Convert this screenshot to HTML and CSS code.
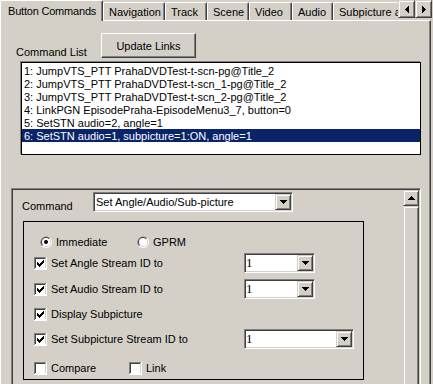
FILE: index.html
```html
<!DOCTYPE html>
<html>
<head>
<meta charset="utf-8">
<link rel="stylesheet" href="styles.css">
</head>
<body>
<div class="tabs">
  <div class="tab active">Button Commands</div>
  <div class="tab w62">Navigation</div>
  <div class="tab w42">Track</div>
  <div class="tab w42">Scene</div>
  <div class="tab w43">Video</div>
  <div class="tab w41">Audio</div>
  <div class="tab clip">Subpicture a</div>
  <div class="tab-scroll">
    <div class="sbtn"><svg width="4" height="7" viewBox="0 0 4 7" shape-rendering="crispEdges"><path d="M3 0h1v7h-1z M2 1h1v5h-1z M1 2h1v3h-1z M0 3h1v1h-1z" fill="#000"/></svg></div>
    <div class="sbtn"><svg width="4" height="7" viewBox="0 0 4 7" shape-rendering="crispEdges"><path d="M0 0h1v7h-1z M1 1h1v5h-1z M2 2h1v3h-1z M3 3h1v1h-1z" fill="#000"/></svg></div>
  </div>
</div>
<div class="panel">
  <div class="list-head">
    <span class="list-label">Command List</span>
    <div class="btn">Update Links</div>
  </div>
  <div class="listbox">
    <div class="item">1: JumpVTS_PTT PrahaDVDTest-t-scn-pg@Title_2</div>
    <div class="item">2: JumpVTS_PTT PrahaDVDTest-t-scn_1-pg@Title_2</div>
    <div class="item">3: JumpVTS_PTT PrahaDVDTest-t-scn_2-pg@Title_2</div>
    <div class="item">4: LinkPGN EpisodePraha-EpisodeMenu3_7, button=0</div>
    <div class="item">5: SetSTN audio=2, angle=1</div>
    <div class="item sel">6: SetSTN audio=1, subpicture=1:ON, angle=1</div>
  </div>
  <div class="scrollview">
    <div class="sv-content">
      <div class="cmd-row">
        <span class="cmd-label">Command</span>
        <div class="combo w200">
          <span class="combo-text sans">Set Angle/Audio/Sub-picture</span>
          <div class="dd"><svg width="7" height="4" viewBox="0 0 7 4" shape-rendering="crispEdges"><path d="M0 0h7v1h-7z M1 1h5v1h-5z M2 2h3v1h-3z M3 3h1v1h-1z" fill="#000"/></svg></div>
        </div>
      </div>
      <div class="group">
        <div class="row radio-row">
          <div class="opt w97">
            <svg class="radio" width="12" height="12" viewBox="0 0 12 12"><circle cx="6" cy="6" r="6" fill="#fff"/><path d="M1.76 10.24A6 6 0 0 1 10.24 1.76Z" fill="#808080"/><circle cx="6" cy="6" r="5" fill="#d4d0c8"/><path d="M2.46 9.54A5 5 0 0 1 9.54 2.46Z" fill="#404040"/><circle cx="6" cy="6" r="4" fill="#fff"/><circle cx="6" cy="6" r="2" fill="#000"/></svg>
            <span>Immediate</span>
          </div>
          <div class="opt">
            <svg class="radio" width="12" height="12" viewBox="0 0 12 12"><circle cx="6" cy="6" r="6" fill="#fff"/><path d="M1.76 10.24A6 6 0 0 1 10.24 1.76Z" fill="#808080"/><circle cx="6" cy="6" r="5" fill="#d4d0c8"/><path d="M2.46 9.54A5 5 0 0 1 9.54 2.46Z" fill="#404040"/><circle cx="6" cy="6" r="4" fill="#fff"/></svg>
            <span>GPRM</span>
          </div>
        </div>
        <div class="row r-angle">
          <div class="opt w210">
            <svg class="cb" width="13" height="13" viewBox="0 0 13 13" shape-rendering="crispEdges"><path d="M0 0h13v13h-13z" fill="#fff"/><path d="M0 0h12v1h-11v11h-1z" fill="#808080"/><path d="M1 1h10v1h-9v9h-1z" fill="#404040"/><path d="M1 11h11v-10h-1v10h-10z" fill="#d4d0c8"/><path d="M2 2h9v9h-9z" fill="#fff"/><path d="M9 3h1v1h-1z M8 4h2v1h-2z M3 5h1v1h-1z M7 5h3v1h-3z M3 6h2v1h-2z M6 6h3v1h-3z M3 7h5v1h-5z M4 8h3v1h-3z M5 9h1v1h-1z" fill="#000"/></svg>
            <span>Set Angle Stream ID to</span>
          </div>
          <div class="combo w71">
            <span class="combo-text serif">1</span>
            <div class="dd"><svg width="7" height="4" viewBox="0 0 7 4" shape-rendering="crispEdges"><path d="M0 0h7v1h-7z M1 1h5v1h-5z M2 2h3v1h-3z M3 3h1v1h-1z" fill="#000"/></svg></div>
          </div>
        </div>
        <div class="row r-audio">
          <div class="opt w210">
            <svg class="cb" width="13" height="13" viewBox="0 0 13 13" shape-rendering="crispEdges"><path d="M0 0h13v13h-13z" fill="#fff"/><path d="M0 0h12v1h-11v11h-1z" fill="#808080"/><path d="M1 1h10v1h-9v9h-1z" fill="#404040"/><path d="M1 11h11v-10h-1v10h-10z" fill="#d4d0c8"/><path d="M2 2h9v9h-9z" fill="#fff"/><path d="M9 3h1v1h-1z M8 4h2v1h-2z M3 5h1v1h-1z M7 5h3v1h-3z M3 6h2v1h-2z M6 6h3v1h-3z M3 7h5v1h-5z M4 8h3v1h-3z M5 9h1v1h-1z" fill="#000"/></svg>
            <span>Set Audio Stream ID to</span>
          </div>
          <div class="combo w71">
            <span class="combo-text serif">1</span>
            <div class="dd"><svg width="7" height="4" viewBox="0 0 7 4" shape-rendering="crispEdges"><path d="M0 0h7v1h-7z M1 1h5v1h-5z M2 2h3v1h-3z M3 3h1v1h-1z" fill="#000"/></svg></div>
          </div>
        </div>
        <div class="row r-disp">
          <div class="opt w210">
            <svg class="cb" width="13" height="13" viewBox="0 0 13 13" shape-rendering="crispEdges"><path d="M0 0h13v13h-13z" fill="#fff"/><path d="M0 0h12v1h-11v11h-1z" fill="#808080"/><path d="M1 1h10v1h-9v9h-1z" fill="#404040"/><path d="M1 11h11v-10h-1v10h-10z" fill="#d4d0c8"/><path d="M2 2h9v9h-9z" fill="#fff"/><path d="M9 3h1v1h-1z M8 4h2v1h-2z M3 5h1v1h-1z M7 5h3v1h-3z M3 6h2v1h-2z M6 6h3v1h-3z M3 7h5v1h-5z M4 8h3v1h-3z M5 9h1v1h-1z" fill="#000"/></svg>
            <span>Display Subpicture</span>
          </div>
        </div>
        <div class="row r-sub">
          <div class="opt w210">
            <svg class="cb" width="13" height="13" viewBox="0 0 13 13" shape-rendering="crispEdges"><path d="M0 0h13v13h-13z" fill="#fff"/><path d="M0 0h12v1h-11v11h-1z" fill="#808080"/><path d="M1 1h10v1h-9v9h-1z" fill="#404040"/><path d="M1 11h11v-10h-1v10h-10z" fill="#d4d0c8"/><path d="M2 2h9v9h-9z" fill="#fff"/><path d="M9 3h1v1h-1z M8 4h2v1h-2z M3 5h1v1h-1z M7 5h3v1h-3z M3 6h2v1h-2z M6 6h3v1h-3z M3 7h5v1h-5z M4 8h3v1h-3z M5 9h1v1h-1z" fill="#000"/></svg>
            <span>Set Subpicture Stream ID to</span>
          </div>
          <div class="combo w110">
            <span class="combo-text serif">1</span>
            <div class="dd"><svg width="7" height="4" viewBox="0 0 7 4" shape-rendering="crispEdges"><path d="M0 0h7v1h-7z M1 1h5v1h-5z M2 2h3v1h-3z M3 3h1v1h-1z" fill="#000"/></svg></div>
          </div>
        </div>
        <div class="row r-cmp">
          <div class="opt w95">
            <svg class="cb" width="13" height="13" viewBox="0 0 13 13" shape-rendering="crispEdges"><path d="M0 0h13v13h-13z" fill="#fff"/><path d="M0 0h12v1h-11v11h-1z" fill="#808080"/><path d="M1 1h10v1h-9v9h-1z" fill="#404040"/><path d="M1 11h11v-10h-1v10h-10z" fill="#d4d0c8"/><path d="M2 2h9v9h-9z" fill="#fff"/></svg>
            <span>Compare</span>
          </div>
          <div class="opt">
            <svg class="cb" width="13" height="13" viewBox="0 0 13 13" shape-rendering="crispEdges"><path d="M0 0h13v13h-13z" fill="#fff"/><path d="M0 0h12v1h-11v11h-1z" fill="#808080"/><path d="M1 1h10v1h-9v9h-1z" fill="#404040"/><path d="M1 11h11v-10h-1v10h-10z" fill="#d4d0c8"/><path d="M2 2h9v9h-9z" fill="#fff"/></svg>
            <span>Link</span>
          </div>
        </div>
      </div>
    </div>
    <div class="vscroll">
      <div class="sb-up"><svg width="7" height="4" viewBox="0 0 7 4" shape-rendering="crispEdges"><path d="M3 0h1v1h-1z M2 1h3v1h-3z M1 2h5v1h-5z M0 3h7v1h-7z" fill="#000"/></svg></div>
      <div class="sb-thumb"></div>
    </div>
  </div>
</div>
</body>
</html>
```
FILE: styles.css
```css
* { box-sizing: border-box; }
html, body { margin: 0; padding: 0; }
body {
  background: #d4d0c8;
  font: 11px "Liberation Sans", Arial, sans-serif;
  color: #000;
  width: 433px;
  height: 384px;
  overflow: hidden;
}

/* ---- tabs ---- */
.tabs {
  display: flex;
  align-items: flex-end;
  height: 20px;
  width: 433px;
  position: relative;
  z-index: 2;
}
.tab {
  height: 18px;
  padding: 0 0 0 5px;
  display: flex;
  align-items: center;
  white-space: nowrap;
  overflow: hidden;
  background: #d4d0c8;
  border-top: 1px solid #fff;
  border-left: 1px solid #fff;
  border-right: 1px solid #404040;
  box-shadow: inset -1px 0 #808080;
  border-radius: 2px 2px 0 0;
  flex: none;
}
.tab.active {
  width: 103px;
  height: 21px;
  margin-bottom: -1px;
  padding-left: 7px;
  padding-bottom: 1px;
  letter-spacing: -0.2px;
}
.w62 { width: 62px; }
.w42 { width: 42px; }
.w43 { width: 43px; }
.w41 { width: 41px; }
.tab.clip { width: 65px; border-right: 0; box-shadow: none; }
.tab-scroll {
  display: flex;
  align-self: flex-start;
  flex: none;
}
.sbtn {
  width: 17px;
  height: 18px;
  display: flex;
  align-items: center;
  justify-content: center;
  background: #d4d0c8;
  border: 1px solid;
  border-color: #d4d0c8 #404040 #404040 #d4d0c8;
  box-shadow: inset 1px 1px #fff, inset -1px -1px #808080;
}

/* ---- panel ---- */
.panel {
  width: 431px;
  height: 364px;
  border-top: 1px solid #fff;
  border-left: 1px solid #fff;
  border-right: 1px solid #404040;
  box-shadow: inset -1px 0 #808080;
  overflow: hidden;
}
.list-head {
  display: flex;
  height: 29px;
  margin-top: 12px;
}
.list-label {
  width: 100px;
  padding-left: 15px;
  align-self: flex-end;
  line-height: 13px;
  padding-bottom: 3px;
}
.btn {
  width: 95px;
  height: 25px;
  display: flex;
  align-items: center;
  justify-content: center;
  background: #d4d0c8;
  border: 1px solid;
  border-color: #fff #404040 #404040 #fff;
  box-shadow: inset -1px -1px #808080;
}
.listbox {
  margin-left: 20px;
  width: 400px;
  height: 93px;
  background: #fff;
  border: 1px solid #000;
  box-shadow: -1px -1px 0 #808080;
  padding-top: 1px;
}
.item {
  height: 13px;
  line-height: 14px;
  padding-left: 2px;
  white-space: nowrap;
}
.item.sel {
  background: #0a246a;
  color: #fff;
}

/* ---- scroll view ---- */
.scrollview {
  margin-top: 33px;
  margin-left: 10px;
  width: 410px;
  height: 240px;
  border: 1px solid;
  border-color: #808080 #fff #fff #808080;
  padding: 1px;
  box-shadow: inset 1px 1px #404040, inset -1px -1px #d4d0c8;
  display: flex;
}
.sv-content {
  flex: 1;
  padding-top: 2px;
}
.cmd-row {
  display: flex;
  height: 20px;
  padding-left: 9px;
}
.cmd-label {
  width: 71px;
  padding-top: 8px;
  line-height: 13px;
}
.combo {
  height: 20px;
  display: flex;
  background: #fff;
  border: 1px solid;
  border-color: #808080 #fff #fff #808080;
  padding: 1px;
  box-shadow: inset 1px 1px #404040, inset -1px -1px #d4d0c8;
}
.w200 { width: 200px; }
.w71 { width: 71px; }
.w110 { width: 110px; }
.combo-text {
  flex: 1;
  padding-left: 1px;
  line-height: 16px;
  white-space: nowrap;
  overflow: hidden;
}
.combo-text.serif {
  padding-left: 0;
  font: 13px/16px "Liberation Serif", "Times New Roman", serif;
}
.dd {
  width: 16px;
  height: 16px;
  display: flex;
  align-items: center;
  justify-content: center;
  background: #d4d0c8;
  border: 1px solid;
  border-color: #d4d0c8 #404040 #404040 #d4d0c8;
  box-shadow: inset 1px 1px #fff, inset -1px -1px #808080;
}
.group {
  margin-top: 9px;
  margin-left: 10px;
  width: 341px;
  height: 159px;
  border: 1px solid #000;
}
.row {
  display: flex;
  align-items: center;
  height: 20px;
  padding-left: 10px;
}
.radio-row { margin-top: 10px; padding-left: 16px; }
.r-angle { margin-top: 1px; }
.r-audio { margin-top: 6px; }
.r-disp { margin-top: 5px; }
.r-sub { margin-top: 5px; }
.r-cmp { margin-top: 9px; }
.opt {
  display: flex;
  align-items: center;
  gap: 4px;
  flex: none;
  white-space: nowrap;
}
.w97 { width: 97px; }
.w210 { width: 210px; }
.w95 { width: 95px; }
.radio, .cb { flex: none; display: block; }

.vscroll {
  width: 16px;
  display: flex;
  flex-direction: column;
}
.sb-up {
  height: 16px;
  display: flex;
  align-items: center;
  justify-content: center;
  background: #d4d0c8;
  border: 1px solid;
  border-color: #d4d0c8 #404040 #404040 #d4d0c8;
  box-shadow: inset 1px 1px #fff, inset -1px -1px #808080;
}
.sb-thumb {
  flex: 1;
  background: #d4d0c8;
  border: 1px solid;
  border-color: #d4d0c8 #404040 #404040 #d4d0c8;
  box-shadow: inset 1px 1px #fff, inset -1px -1px #808080;
}
```
